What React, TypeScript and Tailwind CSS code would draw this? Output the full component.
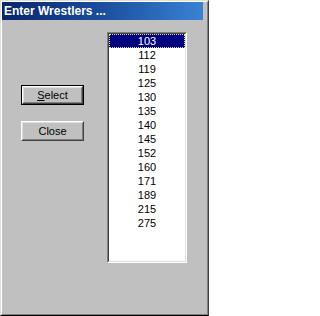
const values = ["103", "112", "119", "125", "130", "135", "140", "145", "152", "160", "171", "189", "215", "275"];

const font = { fontFamily: '"Liberation Sans", Arial, sans-serif' };

const ClassicButton = ({ children, isDefault }: { children: React.ReactNode; isDefault?: boolean }) =>
  isDefault ? (
    <div className="border border-black">
      <div className="border border-t-white border-l-white border-r-[#404040] border-b-[#404040]">
        <div className="flex h-[16px] w-[59px] items-center justify-center border border-t-[#dfdfdf] border-l-[#dfdfdf] border-r-[#808080] border-b-[#808080] bg-[#c0c0c0] text-[11px] leading-none text-black">
          {children}
        </div>
      </div>
    </div>
  ) : (
    <div className="border border-t-white border-l-white border-r-[#404040] border-b-[#404040]">
      <div className="flex h-[18px] w-[61px] items-center justify-center border border-t-[#dfdfdf] border-l-[#dfdfdf] border-r-[#808080] border-b-[#808080] bg-[#c0c0c0] text-[11px] leading-none text-black">
        {children}
      </div>
    </div>
  );

export default function App() {
  return (
    <div className="h-[316px] w-[209px] bg-[#c0c0c0]" style={font}>
      <div className="h-full border border-t-[#dfdfdf] border-l-[#dfdfdf] border-r-[#404040] border-b-black">
        <div className="flex h-full flex-col border border-t-white border-l-white border-r-[#808080] border-b-[#808080] pr-[4px]">
          {/* Title bar */}
          <div className="flex h-[18px] items-center bg-gradient-to-r from-[#0a246a] via-[#1c4f9e] to-[#3a82d4] pl-[2px]">
            <span className="text-[12px] font-bold text-white">Enter Wrestlers ...</span>
          </div>

          {/* Body */}
          <div className="flex pt-[12px]">
            <div className="flex w-[105px] flex-col items-start gap-[16px] pl-[19px] pt-[53px]">
              <ClassicButton isDefault>
                <span>
                  <span className="underline">S</span>elect
                </span>
              </ClassicButton>
              <ClassicButton>Close</ClassicButton>
            </div>

            {/* List box */}
            <div className="h-[231px] w-[80px] border border-t-[#808080] border-l-[#808080] border-r-white border-b-white">
              <div className="h-full border border-t-[#404040] border-l-[#404040] border-r-[#dfdfdf] border-b-[#dfdfdf] bg-white">
                {values.map((v, i) => (
                  <div
                    key={v}
                    className={
                      i === 0
                        ? "flex h-[14px] items-center justify-center bg-[#000080] text-[11px] text-white outline-1 -outline-offset-1 outline-dotted outline-[#e0e0a0]"
                        : "flex h-[14px] items-center justify-center text-[11px] text-black"
                    }
                  >
                    {v}
                  </div>
                ))}
              </div>
            </div>
          </div>
        </div>
      </div>
    </div>
  );
}
